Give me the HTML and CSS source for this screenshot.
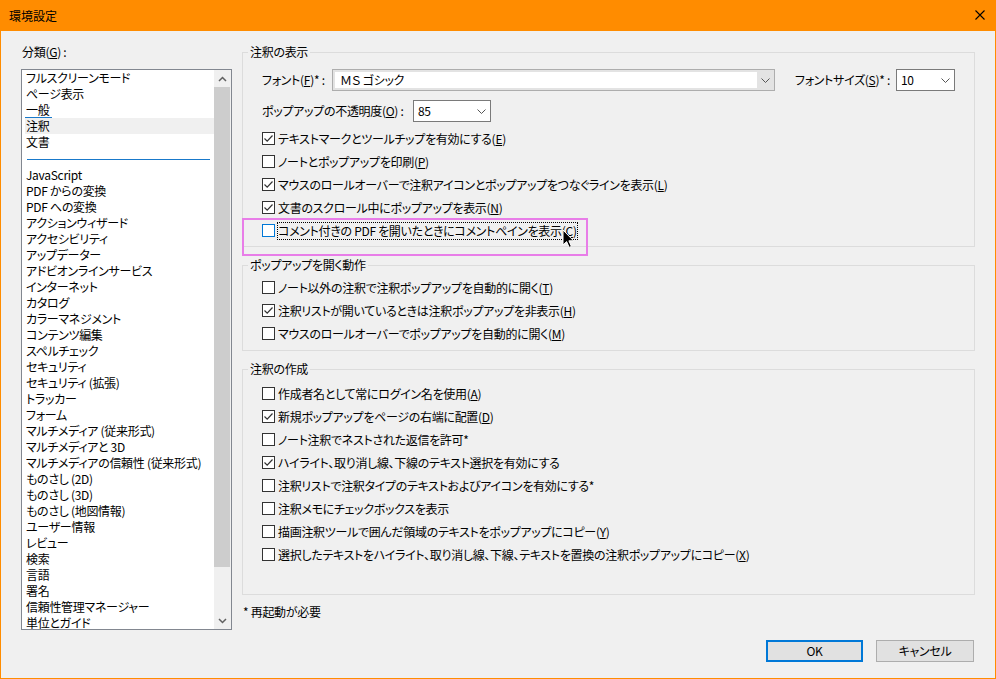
FILE: index.html
```html
<!DOCTYPE html>
<html lang="ja">
<head>
<meta charset="utf-8">
<title>環境設定</title>
<link rel="stylesheet" href="styles.css">
</head>
<body>
<div class="window">
  <div class="titlebar">
    <span class="title">環境設定</span>
    <svg class="close" width="10" height="10" viewBox="0 0 10 10"><path d="M0.5 0.5 L9.5 9.5 M9.5 0.5 L0.5 9.5" stroke="#000" stroke-width="1.1" fill="none"/></svg>
  </div>
  <div class="content">
    <div class="left">
      <div class="cat-label">分類(<u>G</u>) :</div>
      <div class="listbox">
        <div class="list">
          <div class="item">フルスクリーンモード</div>
          <div class="item">ページ表示</div>
          <div class="item"><span class="cur">一般</span></div>
          <div class="item sel">注釈</div>
          <div class="item">文書</div>
          <div class="sep"></div>
          <div class="item">JavaScript</div>
          <div class="item">PDF からの変換</div>
          <div class="item">PDF への変換</div>
          <div class="item">アクションウィザード</div>
          <div class="item">アクセシビリティ</div>
          <div class="item">アップデーター</div>
          <div class="item">アドビオンラインサービス</div>
          <div class="item">インターネット</div>
          <div class="item">カタログ</div>
          <div class="item">カラーマネジメント</div>
          <div class="item">コンテンツ編集</div>
          <div class="item">スペルチェック</div>
          <div class="item">セキュリティ</div>
          <div class="item">セキュリティ (拡張)</div>
          <div class="item">トラッカー</div>
          <div class="item">フォーム</div>
          <div class="item">マルチメディア (従来形式)</div>
          <div class="item">マルチメディアと 3D</div>
          <div class="item">マルチメディアの信頼性 (従来形式)</div>
          <div class="item">ものさし (2D)</div>
          <div class="item">ものさし (3D)</div>
          <div class="item">ものさし (地図情報)</div>
          <div class="item">ユーザー情報</div>
          <div class="item">レビュー</div>
          <div class="item">検索</div>
          <div class="item">言語</div>
          <div class="item">署名</div>
          <div class="item">信頼性管理マネージャー</div>
          <div class="item">単位とガイド</div>
        </div>
        <div class="scrollbar">
          <div class="sb-btn"><svg width="9" height="6" viewBox="0 0 9 6"><path d="M1 5 L4.5 1.5 L8 5" stroke="#606060" stroke-width="1.5" fill="none"/></svg></div>
          <div class="sb-track"><div class="sb-thumb"></div></div>
          <div class="sb-btn"><svg width="9" height="6" viewBox="0 0 9 6"><path d="M1 1 L4.5 4.5 L8 1" stroke="#606060" stroke-width="1.5" fill="none"/></svg></div>
        </div>
      </div>
    </div>

    <div class="right">
      <fieldset class="group g1">
        <legend>注釈の表示</legend>
        <div class="gbody">
          <div class="field-row">
            <span class="lbl lbl-font">フォント(<u>F</u>)* :</span>
            <div class="combo edit combo-font">
              <div class="edit-field">ＭＳ ゴシック</div>
              <span class="arrow"><svg width="9" height="5" viewBox="0 0 9 5"><path d="M0.5 0.5 L4.5 4.5 L8.5 0.5" stroke="#555" stroke-width="1" fill="none"/></svg></span>
            </div>
            <span class="lbl lbl-size">フォントサイズ(<u>S</u>)* :</span>
            <div class="combo combo-size">
              <span class="val">10</span>
              <span class="arrow"><svg width="9" height="5" viewBox="0 0 9 5"><path d="M0.5 0.5 L4.5 4.5 L8.5 0.5" stroke="#555" stroke-width="1" fill="none"/></svg></span>
            </div>
          </div>
          <div class="field-row opacity-row">
            <span class="lbl lbl-opacity">ポップアップの不透明度(<u>O</u>) :</span>
            <div class="combo combo-opacity">
              <span class="val">85</span>
              <span class="arrow"><svg width="9" height="5" viewBox="0 0 9 5"><path d="M0.5 0.5 L4.5 4.5 L8.5 0.5" stroke="#555" stroke-width="1" fill="none"/></svg></span>
            </div>
          </div>
          <div class="checks first">
            <div class="chk"><span class="cb"><svg width="11" height="11" viewBox="0 0 11 11"><path d="M1.5 5.5 L4.2 8.2 L9.5 2.5" stroke="#333" stroke-width="1.2" fill="none"/></svg></span><span>テキストマークとツールチップを有効にする(<u>E</u>)</span></div>
            <div class="chk"><span class="cb"></span><span>ノートとポップアップを印刷(<u>P</u>)</span></div>
            <div class="chk"><span class="cb"><svg width="11" height="11" viewBox="0 0 11 11"><path d="M1.5 5.5 L4.2 8.2 L9.5 2.5" stroke="#333" stroke-width="1.2" fill="none"/></svg></span><span>マウスのロールオーバーで注釈アイコンとポップアップをつなぐラインを表示(<u>L</u>)</span></div>
            <div class="chk"><span class="cb"><svg width="11" height="11" viewBox="0 0 11 11"><path d="M1.5 5.5 L4.2 8.2 L9.5 2.5" stroke="#333" stroke-width="1.2" fill="none"/></svg></span><span>文書のスクロール中にポップアップを表示(<u>N</u>)</span></div>
            <div class="chk"><span class="cb hover"></span><span class="focus">コメント付きの PDF を開いたときにコメントペインを表示(<u>C</u>)</span></div>
          </div>
        </div>
      </fieldset>

      <fieldset class="group g2">
        <legend>ポップアップを開く動作</legend>
        <div class="gbody">
          <div class="chk"><span class="cb"></span><span>ノート以外の注釈で注釈ポップアップを自動的に開く(<u>T</u>)</span></div>
          <div class="chk"><span class="cb"><svg width="11" height="11" viewBox="0 0 11 11"><path d="M1.5 5.5 L4.2 8.2 L9.5 2.5" stroke="#333" stroke-width="1.2" fill="none"/></svg></span><span>注釈リストが開いているときは注釈ポップアップを非表示(<u>H</u>)</span></div>
          <div class="chk"><span class="cb"></span><span>マウスのロールオーバーでポップアップを自動的に開く(<u>M</u>)</span></div>
        </div>
      </fieldset>

      <fieldset class="group g3">
        <legend>注釈の作成</legend>
        <div class="gbody">
          <div class="chk"><span class="cb"></span><span>作成者名として常にログイン名を使用(<u>A</u>)</span></div>
          <div class="chk"><span class="cb"><svg width="11" height="11" viewBox="0 0 11 11"><path d="M1.5 5.5 L4.2 8.2 L9.5 2.5" stroke="#333" stroke-width="1.2" fill="none"/></svg></span><span>新規ポップアップをページの右端に配置(<u>D</u>)</span></div>
          <div class="chk"><span class="cb"></span><span>ノート注釈でネストされた返信を許可*</span></div>
          <div class="chk"><span class="cb"><svg width="11" height="11" viewBox="0 0 11 11"><path d="M1.5 5.5 L4.2 8.2 L9.5 2.5" stroke="#333" stroke-width="1.2" fill="none"/></svg></span><span>ハイライト、取り消し線、下線のテキスト選択を有効にする</span></div>
          <div class="chk"><span class="cb"></span><span>注釈リストで注釈タイプのテキストおよびアイコンを有効にする*</span></div>
          <div class="chk"><span class="cb"></span><span>注釈メモにチェックボックスを表示</span></div>
          <div class="chk"><span class="cb"></span><span>描画注釈ツールで囲んだ領域のテキストをポップアップにコピー(<u>Y</u>)</span></div>
          <div class="chk"><span class="cb"></span><span>選択したテキストをハイライト、取り消し線、下線、テキストを置換の注釈ポップアップにコピー(<u>X</u>)</span></div>
        </div>
      </fieldset>

      <div class="note">* 再起動が必要</div>
      <div class="btnrow">
        <div class="btn default">OK</div>
        <div class="btn">キャンセル</div>
      </div>
    </div>
  </div>

  <div class="highlight"></div>
  <svg class="cursor" width="13" height="20" viewBox="0 0 13 20"><path d="M1 1 L1 16 L4.6 12.6 L7.2 18.4 L9.4 17.4 L6.9 11.8 L11.6 11.8 Z" fill="#000" stroke="#fff" stroke-width="1"/></svg>
</div>
</body>
</html>
```

FILE: styles.css
```css
* { box-sizing: border-box; }
html, body { margin: 0; padding: 0; }
body {
  width: 996px;
  height: 679px;
  overflow: hidden;
  background: #F0F0F0;
  color: #000;
  font-family: "Noto Sans CJK JP", "Noto Sans", sans-serif;
  font-size: 12px;
  line-height: 16px;
  font-feature-settings: "palt";
  letter-spacing: -0.3px;
}
u { text-decoration: underline; text-underline-offset: 1px; }

.window {
  position: relative;
  width: 996px;
  height: 679px;
  border: 1px solid #FF8C00;
  border-top: 0;
  background: #F0F0F0;
  display: flex;
  flex-direction: column;
}
.titlebar {
  height: 31px;
  flex: none;
  background: #FF8C00;
  display: flex;
  align-items: center;
  padding: 0 10px 0 8px;
  letter-spacing: 0;
}
.title { flex: 1; }
.close { margin-top: -2px; }

.content {
  display: flex;
  padding: 13px 0 0 20px;
}
.left { width: 211px; flex: none; }
.cat-label { height: 16px; padding-left: 1px; }
.listbox {
  margin-top: 9px;
  height: 561px;
  border: 1px solid #828790;
  background: #fff;
  display: flex;
}
.list { flex: 1; overflow: hidden; }
.item { height: 16px; padding-left: 4px; white-space: nowrap; }
.item.sel { background: #F0F0F0; margin-left: 3px; padding-left: 1px; }
.cur { display: inline-block; border-bottom: 1px solid #1979CA; height: 16px; margin-left: -1px; padding: 0 3px 0 1px; }
.sep { height: 1px; background: #1979CA; margin: 9px 4px 7px 5px; }
.scrollbar {
  width: 17px;
  flex: none;
  background: #F0F0F0;
  display: flex;
  flex-direction: column;
}
.sb-btn { height: 17px; display: flex; align-items: center; justify-content: center; }
.sb-track { flex: 1; }
.sb-thumb { height: 480px; background: #CDCDCD; margin: 0 1px 0 0; }

.right { width: 733px; margin-left: 10px; flex: none; }
fieldset.group {
  margin: 0;
  padding: 0;
  border: 1px solid #DCDCDC;
  min-width: 0;
}
legend { margin-left: 5px; padding: 0 2px; line-height: 16px; }
.g1 .gbody { padding: 9px 0 4px 19px; }
fieldset.g2 { margin-top: 10px; }
.g2 .gbody { padding: 3px 0 5px 19px; }
fieldset.g3 { margin-top: 10px; }
.g3 .gbody { padding: 5px 0 28px 19px; }

.field-row { display: flex; align-items: center; height: 22px; white-space: nowrap; }
.opacity-row { margin-top: 9px; }
.lbl-font { width: 70px; }
.lbl-size { width: 101px; margin-left: 20px; }
.lbl-opacity { width: 151px; }

.combo {
  height: 22px;
  border: 1px solid #7A7A7A;
  background: #fff;
  display: flex;
  align-items: center;
  padding-left: 4px;
}
.combo .val { flex: 1; }
.combo .arrow { width: 17px; height: 100%; display: flex; align-items: center; justify-content: center; }
.combo-size { width: 59px; }
.combo-opacity { width: 78px; }
.combo.edit {
  width: 443px;
  border-color: #ADADAD;
  background: #E3E3E3;
  padding: 2px 0 2px 2px;
}
.edit-field { flex: 1; height: 100%; background: #fff; padding-left: 5px; line-height: 16px; }

.checks.first { margin-top: 5px; }
.chk { display: flex; align-items: center; height: 23px; white-space: nowrap; }
.cb {
  width: 13px;
  height: 13px;
  flex: none;
  border: 1px solid #333;
  background: #fff;
  margin-right: 3px;
  display: flex;
}
.cb.hover { border-color: #0078D7; }
.focus { outline: 1px dotted #000; }

.note { margin-top: 9px; padding-left: 1px; height: 16px; }
.btnrow {
  display: flex;
  justify-content: flex-end;
  gap: 13px;
  margin-top: 20px;
  padding-right: 1px;
}
.btn {
  width: 98px;
  height: 22px;
  border: 1px solid #ADADAD;
  background: #E1E1E1;
  display: flex;
  align-items: center;
  justify-content: center;
}
.btn.default { width: 97px; border: 2px solid #0078D7; }

.highlight {
  position: absolute;
  left: 241px;
  top: 218px;
  width: 346px;
  height: 38px;
  border: 2px solid #E87DE8;
  pointer-events: none;
}
.cursor { position: absolute; left: 561px; top: 229px; }
```
